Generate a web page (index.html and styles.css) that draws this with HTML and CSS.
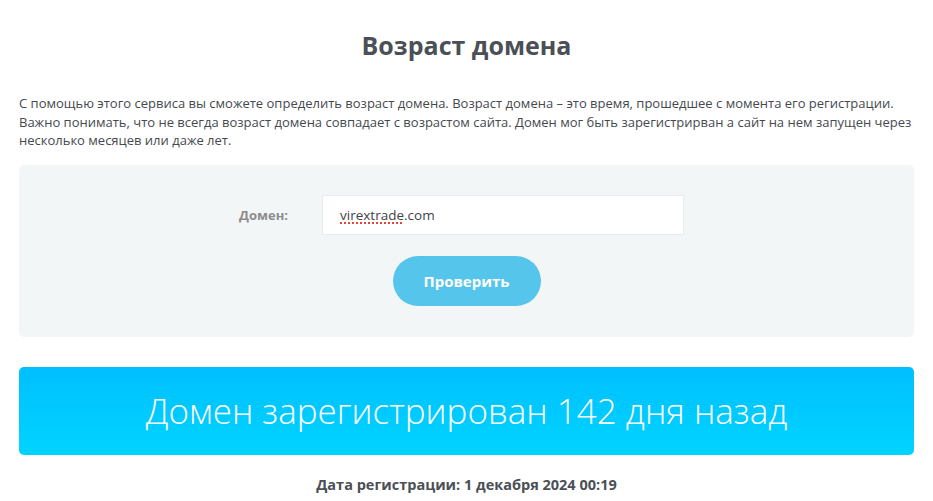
FILE: index.html
```html
<!DOCTYPE html>
<html lang="ru">
<head>
    <meta charset="UTF-8">
    <meta name="viewport" content="width=device-width, initial-scale=1.0">
    <title>Возраст домена</title>
    <link rel="stylesheet" href="styles.css">
</head>
<body>

<div class="page">
    <h1 class="title">Возраст домена</h1>

    <p class="intro">С помощью этого сервиса вы сможете определить возраст домена. Возраст домена – это время, прошедшее с момента его регистрации. Важно понимать, что не всегда возраст домена совпадает с возрастом сайта. Домен мог быть зарегистрирван а сайт на нем запущен через несколько месяцев или даже лет.</p>

    <form class="check-form" onsubmit="return false">
        <div class="form-row">
            <label class="form-label" for="domain">Домен:</label>
            <div class="form-input" id="domain" contenteditable="true" spellcheck="false"><span class="misspelled">virextrade</span>.com</div>
        </div>
        <button class="check-btn" type="submit">Проверить</button>
    </form>

    <div class="result">Домен зарегистрирован 142 дня назад</div>

    <p class="reg-date">Дата регистрации: 1 декабря 2024 00:19</p>
</div>

</body>
</html>
```

FILE: styles.css
```css
body {
    margin: 0;
    font-family: "Open Sans", "Noto Sans", sans-serif;
    background-color: #fff;
    color: #4b4f56;
}
.page {
    padding: 0 19px;
}
.title {
    margin: 0;
    padding-top: 29px;
    height: 32px;
    line-height: 32px;
    font-size: 25px;
    font-weight: 700;
    text-align: center;
    color: #4b4f56;
}
.intro {
    margin: 33px 0 0;
    font-size: 13px;
    line-height: 18.5px;
    color: #45494f;
}
.check-form {
    margin-top: 15px;
    background-color: #f3f6f7;
    border-radius: 5px;
    padding: 30px 0 31px;
    display: flex;
    flex-direction: column;
    align-items: center;
}
.form-row {
    display: flex;
    align-items: center;
    margin-right: 10px;
}
.form-label {
    width: 83px;
    font-size: 13px;
    font-weight: 700;
    color: #8c8c8c;
}
.form-input {
    box-sizing: border-box;
    width: 362px;
    height: 40px;
    line-height: 38px;
    padding: 0 17px;
    border: 1px solid #e8ecee;
    background: #fff;
    font-size: 13.5px;
    color: #3e4248;
    outline: none;
    white-space: nowrap;
    overflow: hidden;
}
.misspelled {
    text-decoration: underline dotted #e0453a;
    text-decoration-thickness: 2px;
    text-underline-offset: 3px;
}
.check-btn {
    margin-top: 21px;
    width: 148px;
    height: 50px;
    border: 0;
    border-radius: 25px;
    background-color: #56c5ec;
    color: #fff;
    font-family: inherit;
    font-size: 15px;
    font-weight: 700;
    cursor: pointer;
}
.result {
    margin-top: 30px;
    height: 88px;
    border-radius: 5px;
    background: linear-gradient(to bottom, #00bfff, #00d4ff);
    color: #fff;
    font-size: 35px;
    font-weight: 300;
    display: flex;
    align-items: center;
    justify-content: center;
}
.reg-date {
    margin: 20px 0 0;
    text-align: center;
    font-size: 14.5px;
    font-weight: 700;
    color: #4b4f56;
}
```
